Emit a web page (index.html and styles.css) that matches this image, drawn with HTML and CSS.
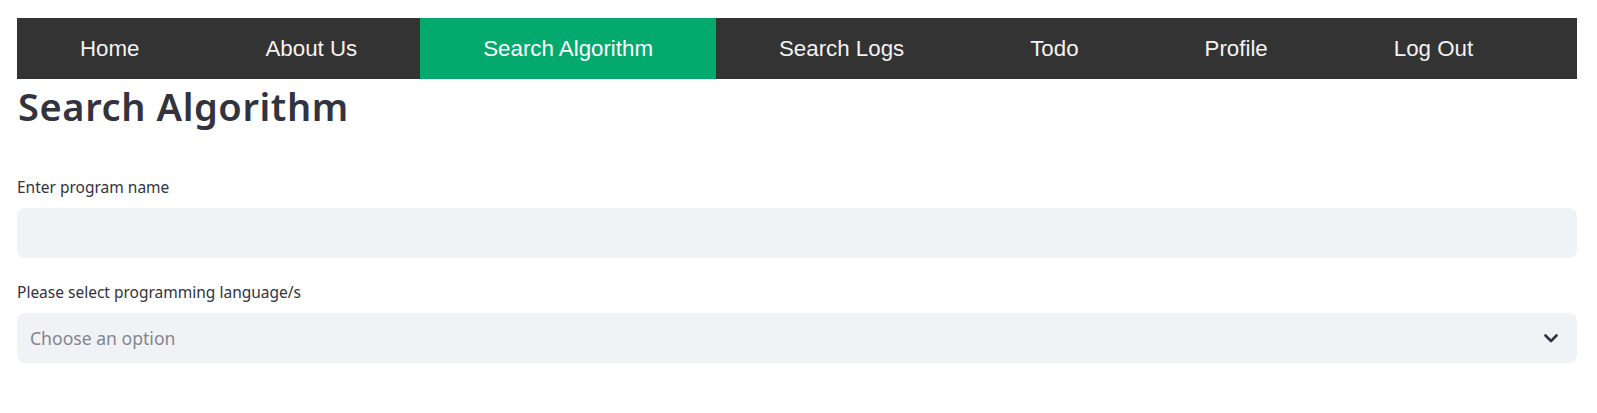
FILE: index.html
```html
<!DOCTYPE html>
<html lang="en">
<head>
<meta charset="utf-8">
<title>Search Algorithm</title>
<link rel="stylesheet" href="styles.css">
</head>
<body>
<div class="page">
  <nav class="nav">
    <a href="#">Home</a>
    <a href="#">About Us</a>
    <a href="#" class="active">Search Algorithm</a>
    <a href="#">Search Logs</a>
    <a href="#">Todo</a>
    <a href="#">Profile</a>
    <a href="#">Log Out</a>
  </nav>
  <h1 class="title">Search Algorithm</h1>
  <div class="field first">
    <label class="label">Enter program name</label>
    <div class="input"></div>
  </div>
  <div class="field">
    <label class="label">Please select programming language/s</label>
    <div class="input select">
      <span class="placeholder">Choose an option</span>
      <svg class="chev" width="14" height="9" viewBox="0 0 14 9"><path d="M1.5 1.5 L7 7 L12.5 1.5" fill="none" stroke="#31333F" stroke-width="2.6" stroke-linecap="round" stroke-linejoin="round"/></svg>
    </div>
  </div>
</div>
</body>
</html>
```
FILE: styles.css
```css
body {
  margin: 0;
  font-family: "Noto Sans", sans-serif;
  color: #31333F;
  background: #fff;
}
.page {
  padding: 18px 20px 0 17px;
}
.nav {
  display: flex;
  background: #333333;
  height: 61px;
}
.nav a {
  padding: 0 63px;
  line-height: 61px;
  color: #f2f2f2;
  font-family: "Liberation Sans", Arial, sans-serif;
  font-size: 22.3px;
  text-decoration: none;
  white-space: nowrap;
}
.nav a.active {
  background: #04AA6D;
  color: #fff;
}
.title {
  margin: 5px 0 0 1px;
  font-size: 38px;
  font-weight: 600;
  line-height: 44px;
  letter-spacing: 0.6px;
}
.field {
  margin-top: 24px;
}
.field.first {
  margin-top: 49px;
}
.label {
  display: block;
  font-size: 15.5px;
  line-height: 20px;
  margin-bottom: 11px;
}
.input {
  height: 50px;
  background: #F0F2F6;
  border-radius: 8px;
  display: flex;
  align-items: center;
}
.select {
  justify-content: space-between;
  padding: 0 19px 0 13px;
}
.placeholder {
  font-size: 17.6px;
  color: #83858C;
}
.chev {
  display: block;
}
```
